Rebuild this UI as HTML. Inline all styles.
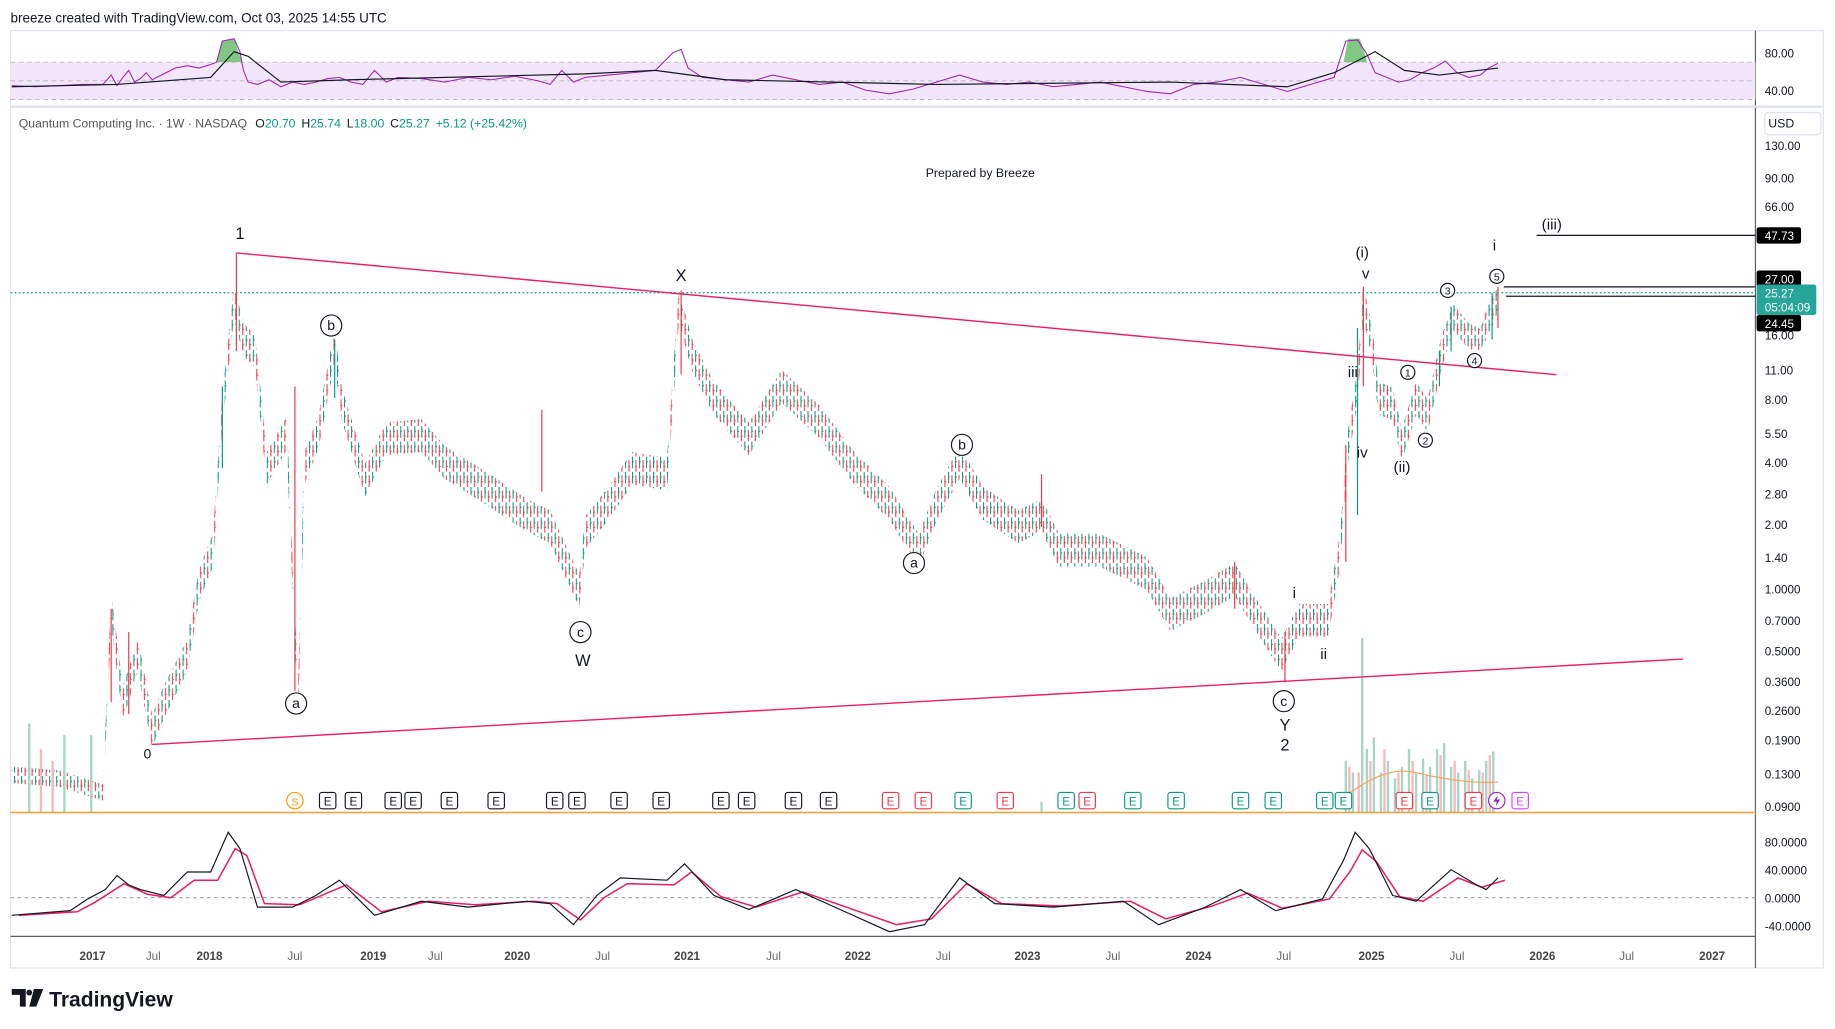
<!DOCTYPE html>
<html><head><meta charset="utf-8"><style>
html,body{margin:0;padding:0;background:#fff;overflow:hidden}
svg{display:block;font-family:"Liberation Sans",Arial,sans-serif}
</style></head><body>
<svg width="1835" height="1029" viewBox="0 0 1568 879" xmlns="http://www.w3.org/2000/svg">
<defs>
<pattern id="bp" width="6" height="13" patternUnits="userSpaceOnUse">
<rect x="0" y="0" width="6" height="13" fill="#fff"/>
<rect x="0" y="0" width="0.9" height="10" fill="#089981"/>
<rect x="0" y="4" width="1.6" height="0.9" fill="#089981"/>
<rect x="3" y="3" width="0.9" height="10" fill="#f23645"/>
<rect x="3" y="8" width="1.6" height="0.9" fill="#f23645"/>
</pattern>
</defs>
<rect width="1568" height="879" fill="#fff"/>
<text x="9" y="19" font-size="11.5" fill="#131722">breeze created with TradingView.com, Oct 03, 2025 14:55 UTC</text>
<rect x="9" y="26" width="1549" height="801" fill="none" stroke="#e0e3eb"/>
<line x1="1500" y1="26" x2="1500" y2="827" stroke="#5d606b"/>
<line x1="9" y1="91" x2="1558" y2="91" stroke="#e0e3eb" stroke-width="2"/>
<line x1="9" y1="695" x2="1500" y2="695" stroke="#e0e3eb"/>
<line x1="9" y1="800" x2="1500" y2="800" stroke="#5d606b"/>
<!-- RSI -->
<rect x="9" y="53" width="1491" height="32" fill="#f3e5fb"/>
<line x1="9" y1="53" x2="1500" y2="53" stroke="#aaa" stroke-dasharray="4,3" stroke-width="0.6"/>
<line x1="9" y1="69" x2="1500" y2="69" stroke="#aaa" stroke-dasharray="4,3" stroke-width="0.6"/>
<line x1="9" y1="85" x2="1500" y2="85" stroke="#aaa" stroke-dasharray="4,3" stroke-width="0.6"/>
<path d="M185,53 L190,35 L200,33 L204,45 L207,53Z" fill="#4caf50" opacity=".7"/>
<path d="M1148,53 L1152,33 L1162,33 L1166,45 L1168,53Z" fill="#4caf50" opacity=".7"/>
<path d="M10,73 L30,74 L50,73 L70,72 L88,72 L95,64 L100,73 L105,66 L110,60 L115,70 L120,67 L125,62 L130,68 L140,63 L150,58 L160,56 L170,58 L180,55 L185,53 L190,35 L200,33 L205,44 L208,60 L212,70 L220,72 L230,68 L240,74 L250,70 L260,72 L270,70 L280,67 L290,66 L300,70 L310,72 L320,60 L330,70 L340,66 L360,67 L380,70 L400,66 L420,68 L440,65 L460,69 L470,72 L480,60 L490,70 L500,66 L520,64 L540,62 L560,60 L575,45 L582,42 L588,58 L600,66 L620,68 L640,70 L660,64 L680,68 L700,72 L720,70 L740,77 L760,80 L780,76 L800,70 L820,64 L840,70 L860,72 L880,70 L900,74 L920,72 L940,70 L960,74 L980,78 L1000,80 L1020,72 L1040,70 L1060,66 L1080,72 L1100,78 L1120,72 L1140,66 L1150,35 L1160,34 L1168,46 L1175,62 L1185,66 L1195,70 L1205,68 L1215,62 L1225,58 L1235,52 L1245,62 L1255,66 L1265,64 L1272,58 L1280,54" fill="none" stroke="#9c27b0" stroke-width="0.9"/>
<path d="M10,74 L100,72 L180,66 L200,44 L212,48 L240,70 L300,68 L500,63 L560,60 L620,68 L800,72 L1000,70 L1100,74 L1140,62 L1175,44 L1200,60 L1230,64 L1280,58" fill="none" stroke="#131722" stroke-width="1"/>
<text x="1508" y="49" font-size="10" fill="#131722">80.00</text>
<text x="1508" y="81" font-size="10" fill="#131722">40.00</text>
<!-- legend -->
<text x="16" y="109" font-size="10.5" fill="#555">Quantum Computing Inc. · 1W · NASDAQ<tspan fill="#131722" dx="7">O</tspan><tspan fill="#089981">20.70</tspan><tspan fill="#131722" dx="5">H</tspan><tspan fill="#089981">25.74</tspan><tspan fill="#131722" dx="5">L</tspan><tspan fill="#089981">18.00</tspan><tspan fill="#131722" dx="5">C</tspan><tspan fill="#089981">25.27</tspan><tspan fill="#089981" dx="5">+5.12 (+25.42%)</tspan></text>
<text x="791" y="151" font-size="10.5" fill="#131722">Prepared by Breeze</text>
<rect x="1508" y="96" width="48" height="19" rx="3" fill="#fff" stroke="#e0e3eb"/>
<text x="1511" y="109" font-size="10.5" fill="#131722">USD</text>
<line x1="9" y1="250" x2="1500" y2="250" stroke="#089981" stroke-dasharray="1.5,2"/>
<!-- price bars band -->
<polygon fill="url(#bp)" points="10,655 50,658 88,670 95,506 105,586 118,546 130,611 140,586 160,546 170,486 182,456 190,336 200,244 208,276 218,286 228,386 245,356 252,526 255,576 260,386 272,356 286,281 292,331 312,396 330,361 360,358 380,381 420,406 450,426 470,436 495,491 500,441 520,416 540,386 570,391 580,248 592,291 610,326 640,361 668,316 700,346 730,386 760,416 785,456 800,418 820,381 840,416 870,436 890,426 905,456 940,456 980,476 1000,511 1030,496 1055,481 1070,506 1095,546 1110,516 1135,516 1145,456 1152,366 1160,316 1165,244 1172,276 1178,326 1190,331 1198,366 1210,326 1220,341 1232,286 1242,260 1255,276 1265,281 1273,256 1280,246 1280,266 1273,284 1265,300 1255,298 1242,282 1232,314 1220,369 1210,354 1198,394 1190,359 1178,354 1172,304 1165,272 1160,344 1152,394 1145,484 1135,544 1110,544 1095,574 1070,534 1055,509 1030,524 1000,539 980,504 940,484 905,484 890,454 870,464 840,444 820,409 800,446 785,484 760,444 730,414 700,374 668,344 640,389 610,354 592,319 580,276 570,419 540,414 520,444 500,469 495,519 470,464 450,454 420,434 380,409 360,386 330,389 312,424 292,359 286,309 272,384 260,414 255,604 252,554 245,384 228,414 218,314 208,304 200,272 190,364 182,484 170,514 160,574 140,614 130,639 118,574 105,614 95,534 88,684 50,672 10,669"/>
<path d="M202,216V300 M252,330V590 M582,248V320 M1098,540V583 M1165,245V330 M1280,245V280 M95,520V600 M110,540V610 M463,350V420 M890,405V450 M1055,480V520 M1150,380V480" stroke="#f23645" stroke-width="1"/>
<path d="M190,330V400 M286,290V340 M1160,280V440 M1240,262V300 M1275,250V290 M1230,300V330" stroke="#089981" stroke-width="1"/>
<!-- volume -->
<path d="M1150,694V650 M1156,694V660 M1164,694V545 M1168,694V640 M1174,694V630 M1180,694V660 M1186,694V650 M1192,694V665 M1198,694V655 M1204,694V640 M1210,694V660 M1216,694V648 M1222,694V655 M1228,694V640 M1234,694V635 M1240,694V655 M1246,694V660 M1252,694V650 M1258,694V665 M1264,694V658 M1270,694V650 M1276,694V642 M25,694V618 M55,694V628 M78,694V628 M890,694V685" stroke="#a5d6c7" stroke-width="2"/>
<path d="M1153,694V655 M1161,694V660 M1171,694V650 M1183,694V640 M1195,694V660 M1207,694V650 M1219,694V662 M1231,694V645 M1243,694V650 M1255,694V658 M1267,694V660 M1273,694V645 M35,694V640 M45,694V650" stroke="#f7b9bd" stroke-width="2"/>
<path d="M1150,680 C1170,665 1190,655 1210,660 S1260,670 1280,668" fill="none" stroke="#f4a460"/>
<!-- trendlines -->
<line x1="202" y1="216" x2="1330" y2="320" stroke="#e91e63" stroke-width="1.2"/>
<line x1="130" y1="636" x2="1438" y2="563" stroke="#e91e63" stroke-width="1.2"/>
<line x1="1313" y1="201" x2="1500" y2="201" stroke="#131722"/>
<line x1="1285" y1="245" x2="1500" y2="245" stroke="#131722"/>
<line x1="1287" y1="253" x2="1500" y2="253" stroke="#131722"/>
<!-- labels -->
<g font-size="14" fill="#131722" text-anchor="middle">
<text x="205" y="204">1</text><text x="582" y="240">X</text><text x="498" y="569">W</text><text x="1098" y="624">Y</text><text x="1098" y="641">2</text>
<text x="1164" y="220" font-size="13">(i)</text><text x="1167" y="238" font-size="13">v</text><text x="1156" y="322" font-size="13">iii</text><text x="1164" y="391" font-size="13">iv</text><text x="1198" y="403" font-size="13">(ii)</text><text x="1106" y="511" font-size="13">i</text><text x="1131" y="563" font-size="13">ii</text><text x="1277" y="214" font-size="13">i</text><text x="1326" y="196" font-size="13">(iii)</text><text x="126" y="648" font-size="12">0</text>
<g stroke="#131722" fill="#fff"><circle cx="283" cy="278" r="9"/><circle cx="253" cy="601" r="9"/><circle cx="496" cy="540" r="9"/><circle cx="822" cy="380" r="9"/><circle cx="781" cy="481" r="9"/><circle cx="1097" cy="599" r="9"/>
<circle cx="1203" cy="318" r="6"/><circle cx="1218" cy="376" r="6"/><circle cx="1237" cy="248" r="6"/><circle cx="1260" cy="308" r="6"/><circle cx="1279" cy="236" r="6"/></g>
<g font-size="12"><text x="283" y="282">b</text><text x="253" y="605">a</text><text x="496" y="544">c</text><text x="822" y="384">b</text><text x="781" y="485">a</text><text x="1097" y="603">c</text></g>
<g font-size="9"><text x="1203" y="321.5">1</text><text x="1218" y="379.5">2</text><text x="1237" y="251.5">3</text><text x="1260" y="311.5">4</text><text x="1279" y="239.5">5</text></g>
</g>
<!-- price axis -->
<g font-size="10" fill="#131722">
<text x="1508" y="128">130.00</text><text x="1508" y="156">90.00</text><text x="1508" y="180">66.00</text><text x="1508" y="290">16.00</text><text x="1508" y="320">11.00</text><text x="1508" y="345">8.00</text><text x="1508" y="374">5.50</text><text x="1508" y="399">4.00</text><text x="1508" y="426">2.80</text><text x="1508" y="452">2.00</text><text x="1508" y="480">1.40</text><text x="1508" y="507">1.0000</text><text x="1508" y="534">0.7000</text><text x="1508" y="560">0.5000</text><text x="1508" y="586">0.3600</text><text x="1508" y="611">0.2600</text><text x="1508" y="636">0.1900</text><text x="1508" y="665">0.1300</text><text x="1508" y="693">0.0900</text>
<text x="1508" y="723">80.0000</text><text x="1508" y="747">40.0000</text><text x="1508" y="771">0.0000</text><text x="1508" y="795">-40.0000</text>
</g>
<g font-size="10" text-anchor="middle" fill="#666">
<text x="79" y="820" font-weight="bold" fill="#444">2017</text><text x="131" y="820">Jul</text><text x="179" y="820" font-weight="bold" fill="#444">2018</text><text x="252" y="820">Jul</text><text x="319" y="820" font-weight="bold" fill="#444">2019</text><text x="372" y="820">Jul</text><text x="442" y="820" font-weight="bold" fill="#444">2020</text><text x="515" y="820">Jul</text><text x="587" y="820" font-weight="bold" fill="#444">2021</text><text x="661" y="820">Jul</text><text x="733" y="820" font-weight="bold" fill="#444">2022</text><text x="806" y="820">Jul</text><text x="878" y="820" font-weight="bold" fill="#444">2023</text><text x="951" y="820">Jul</text><text x="1024" y="820" font-weight="bold" fill="#444">2024</text><text x="1097" y="820">Jul</text><text x="1172" y="820" font-weight="bold" fill="#444">2025</text><text x="1245" y="820">Jul</text><text x="1318" y="820" font-weight="bold" fill="#444">2026</text><text x="1390" y="820">Jul</text><text x="1463" y="820" font-weight="bold" fill="#444">2027</text>
</g>
<rect x="1501" y="194" width="38" height="14" rx="2" fill="#000"/><text x="1508" y="205" font-size="10" fill="#fff">47.73</text>
<rect x="1501" y="231" width="38" height="14" rx="2" fill="#000"/><text x="1508" y="242" font-size="10" fill="#fff">27.00</text>
<rect x="1501" y="243" width="51" height="26" rx="2" fill="#26a69a"/><text x="1508" y="254" font-size="10" fill="#fff">25.27</text><text x="1508" y="266" font-size="10" fill="#fff">05:04:09</text>
<rect x="1501" y="269" width="38" height="14" rx="2" fill="#000"/><text x="1508" y="280" font-size="10" fill="#fff">24.45</text>
<!-- oscillator -->
<line x1="9" y1="767" x2="1500" y2="767" stroke="#777" stroke-dasharray="3,3" stroke-width="0.6"/>
<path d="M16,782 L66,779 L81,771 L106,755 L126,764 L146,767 L166,752 L186,752 L201,725 L211,731 L226,772 L256,773 L296,756 L326,779 L366,770 L406,773 L456,770 L476,772 L496,786 L516,767 L536,755 L576,756 L591,745 L616,766 L646,775 L686,762 L726,776 L766,790 L796,785 L826,755 L856,772 L906,774 L966,770 L996,785 L1036,774 L1066,763 L1096,776 L1136,768 L1154,744 L1164,726 L1176,736 L1196,766 L1216,770 L1246,750 L1266,758 L1286,752" fill="none" stroke="#e91e63" stroke-width="1.3"/>
<path d="M10,782 L60,778 L75,768 L90,760 L100,748 L110,756 L120,760 L140,765 L160,745 L180,745 L195,711 L205,725 L220,775 L250,775 L270,765 L290,752 L320,782 L360,770 L400,775 L450,770 L470,772 L490,790 L510,765 L530,750 L570,752 L585,738 L610,765 L640,777 L680,760 L720,778 L760,796 L790,790 L820,750 L850,772 L900,775 L960,770 L990,790 L1030,775 L1060,760 L1090,778 L1130,768 L1148,735 L1158,711 L1170,725 L1190,765 L1210,770 L1240,743 L1260,755 L1270,760 L1280,750" fill="none" stroke="#131722" stroke-width="1"/>
<!-- earnings -->
<line x1="9" y1="694" x2="1500" y2="694" stroke="#ff9800" stroke-width="1"/>
<circle cx="252" cy="684" r="7" fill="#fff" stroke="#ff9800"/><text x="252" y="688" font-size="9" fill="#ff9800" text-anchor="middle">S</text>
<g fill="#fff" stroke="#131722"><rect x="273" y="677" width="14" height="14" rx="2"/><rect x="295" y="677" width="14" height="14" rx="2"/><rect x="329" y="677" width="14" height="14" rx="2"/><rect x="346" y="677" width="14" height="14" rx="2"/><rect x="377" y="677" width="14" height="14" rx="2"/><rect x="417" y="677" width="14" height="14" rx="2"/><rect x="467" y="677" width="14" height="14" rx="2"/><rect x="486" y="677" width="14" height="14" rx="2"/><rect x="522" y="677" width="14" height="14" rx="2"/><rect x="558" y="677" width="14" height="14" rx="2"/><rect x="609" y="677" width="14" height="14" rx="2"/><rect x="631" y="677" width="14" height="14" rx="2"/><rect x="671" y="677" width="14" height="14" rx="2"/><rect x="701" y="677" width="14" height="14" rx="2"/></g>
<g font-size="10" fill="#131722" text-anchor="middle"><text x="280" y="688">E</text><text x="302" y="688">E</text><text x="336" y="688">E</text><text x="353" y="688">E</text><text x="384" y="688">E</text><text x="424" y="688">E</text><text x="474" y="688">E</text><text x="493" y="688">E</text><text x="529" y="688">E</text><text x="565" y="688">E</text><text x="616" y="688">E</text><text x="638" y="688">E</text><text x="678" y="688">E</text><text x="708" y="688">E</text></g>
<g fill="#fff" stroke="#f23645"><rect x="754" y="677" width="14" height="14" rx="2"/><rect x="782" y="677" width="14" height="14" rx="2"/><rect x="852" y="677" width="14" height="14" rx="2"/><rect x="922" y="677" width="14" height="14" rx="2"/><rect x="1193" y="677" width="14" height="14" rx="2"/><rect x="1252" y="677" width="14" height="14" rx="2"/></g>
<g font-size="10" fill="#f23645" text-anchor="middle"><text x="761" y="688">E</text><text x="789" y="688">E</text><text x="859" y="688">E</text><text x="929" y="688">E</text><text x="1200" y="688">E</text><text x="1259" y="688">E</text></g>
<g fill="#fff" stroke="#089981"><rect x="816" y="677" width="14" height="14" rx="2"/><rect x="904" y="677" width="14" height="14" rx="2"/><rect x="961" y="677" width="14" height="14" rx="2"/><rect x="998" y="677" width="14" height="14" rx="2"/><rect x="1053" y="677" width="14" height="14" rx="2"/><rect x="1081" y="677" width="14" height="14" rx="2"/><rect x="1125" y="677" width="14" height="14" rx="2"/><rect x="1141" y="677" width="14" height="14" rx="2"/><rect x="1215" y="677" width="14" height="14" rx="2"/></g>
<g font-size="10" fill="#089981" text-anchor="middle"><text x="823" y="688">E</text><text x="911" y="688">E</text><text x="968" y="688">E</text><text x="1005" y="688">E</text><text x="1060" y="688">E</text><text x="1088" y="688">E</text><text x="1132" y="688">E</text><text x="1148" y="688">E</text><text x="1222" y="688">E</text></g>
<circle cx="1279" cy="684" r="7" fill="#fff" stroke="#9c27b0"/><path d="M1280,679 L1276,685 L1279,685 L1278,689 L1282,683 L1279,683Z" fill="#9c27b0"/>
<rect x="1292" y="677" width="14" height="14" rx="2" fill="#fff" stroke="#e040fb"/><text x="1299" y="688" font-size="10" fill="#e040fb" text-anchor="middle">E</text>
<!-- logo -->
<g transform="translate(10,845)" fill="#131722"><path d="M0,0h12v15h-5v-10h-7z"/><circle cx="15" cy="3" r="2.5"/><path d="M19,0h8l-6,15h-6z"/></g>
<text x="42" y="860" font-size="18" font-weight="bold" fill="#131722">TradingView</text>
</svg>
</body></html>
